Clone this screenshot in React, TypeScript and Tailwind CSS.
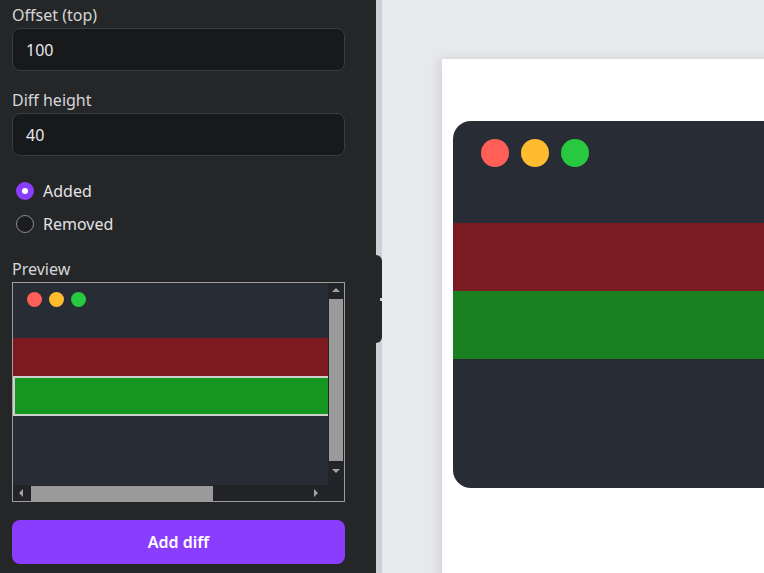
import React from 'react';

const font = { fontFamily: '"Noto Sans", "Open Sans", sans-serif' };

function Field({ label, value }: { label: string; value: string }) {
  return (
    <div className="flex flex-col">
      <label className="text-[16px] leading-5 text-[#d6d6d8]">{label}</label>
      <div className="mt-[3px] flex h-[43px] items-center rounded-lg border border-[#3b3c3f] bg-[#18191b] px-[13px] text-[16px] text-[#e8e8ea]">
        {value}
      </div>
    </div>
  );
}

function Radio({ label, checked }: { label: string; checked?: boolean }) {
  return (
    <div className="flex h-[33px] items-center gap-[9px]">
      {checked ? (
        <span className="ml-[4px] flex h-[18px] w-[18px] items-center justify-center rounded-full bg-[#8b3dff]">
          <span className="h-[6px] w-[6px] rounded-full bg-white" />
        </span>
      ) : (
        <span className="ml-[4px] h-[18px] w-[18px] rounded-full border-[1.5px] border-[#8c8c90] bg-[#1b1c1e]" />
      )}
      <span className="text-[16px] text-[#e2e2e4]">{label}</span>
    </div>
  );
}

function Dots({ size, gap }: { size: string; gap: string }) {
  return (
    <div className={`flex ${gap}`}>
      <span className={`${size} rounded-full bg-[#ff5f57]`} />
      <span className={`${size} rounded-full bg-[#febc2e]`} />
      <span className={`${size} rounded-full bg-[#28c840]`} />
    </div>
  );
}

function Preview() {
  return (
    <div className="mt-[3px] grid h-[220px] grid-cols-[1fr_16px] grid-rows-[1fr_16px] border border-[#9d9d9f] bg-[#232427]">
      {/* scaled window */}
      <div className="flex flex-col overflow-hidden bg-[#282c35]">
        <div className="pl-[14px] pt-[9px]">
          <Dots size="h-[15px] w-[15px]" gap="gap-[7px]" />
        </div>
        <div className="mt-[31px] h-[38px] bg-[#7c1a20]" />
        <div className="h-[40px] border-y-2 border-l-2 border-[#cfcfcf] bg-[#14961f]" />
        <div className="flex-1" />
      </div>
      {/* vertical scrollbar */}
      <div className="flex flex-col items-center bg-[#232427]">
        <span className="mt-[5px] h-0 w-0 border-x-[4px] border-b-[4px] border-x-transparent border-b-[#a3a3a3]" />
        <div className="mt-[7px] h-[162px] w-[14px] bg-[#9a9a9a]" />
        <span className="mt-[8px] h-0 w-0 border-x-[4px] border-t-[4px] border-x-transparent border-t-[#a3a3a3]" />
      </div>
      {/* horizontal scrollbar */}
      <div className="flex items-center bg-[#232427]">
        <span className="ml-[6px] h-0 w-0 border-y-[4px] border-r-[4px] border-y-transparent border-r-[#a3a3a3]" />
        <div className="ml-[8px] h-[15px] w-[182px] bg-[#9a9a9a]" />
        <span className="ml-[101px] h-0 w-0 border-y-[4px] border-l-[4px] border-y-transparent border-l-[#a3a3a3]" />
      </div>
      <div className="bg-[#232427]" />
    </div>
  );
}

export default function App() {
  return (
    <div className="flex h-[573px] w-[764px] overflow-hidden" style={font}>
      <aside className="flex w-[376px] shrink-0 flex-col bg-[#252628] pl-3 pr-[31px] pt-[5px]">
        <Field label="Offset (top)" value="100" />
        <div className="mt-[19px]">
          <Field label="Diff height" value="40" />
        </div>
        <div className="mt-[18px] flex flex-col">
          <Radio label="Added" checked />
          <Radio label="Removed" />
        </div>
        <div className="mt-[19px] flex flex-col">
          <span className="text-[16px] leading-5 text-[#d6d6d8]">Preview</span>
          <Preview />
        </div>
        <button className="mt-[18px] h-[44px] rounded-lg bg-[#8b3dff] text-[16px] font-semibold text-white">
          Add diff
        </button>
      </aside>

      <div className="relative w-[6px] shrink-0 bg-[#cdd0d6]">
        <div className="absolute left-0 top-[255px] flex h-[88px] w-[6px] items-center rounded-r-[6px] bg-[#252628]">
          <span className="ml-[4px] h-[3px] w-[2px] bg-[#d8d8d8]" />
        </div>
      </div>

      <main className="flex-1 overflow-hidden bg-[#e8e9ec] pl-[60px] pt-[59px]">
        <div className="h-[600px] w-[420px] bg-white pl-[11px] pt-[62px] shadow-[-3px_0_10px_rgba(0,0,0,0.10)]">
          <div className="flex h-[367px] w-[420px] flex-col overflow-hidden rounded-[18px] bg-[#282c35]">
            <div className="pl-[28px] pt-[18px]">
              <Dots size="h-[28px] w-[28px]" gap="gap-[12px]" />
            </div>
            <div className="mt-[56px] h-[68px] bg-[#7b1a20]" />
            <div className="h-[68px] bg-[#1b8021]" />
            <div className="flex-1" />
          </div>
        </div>
      </main>
    </div>
  );
}
